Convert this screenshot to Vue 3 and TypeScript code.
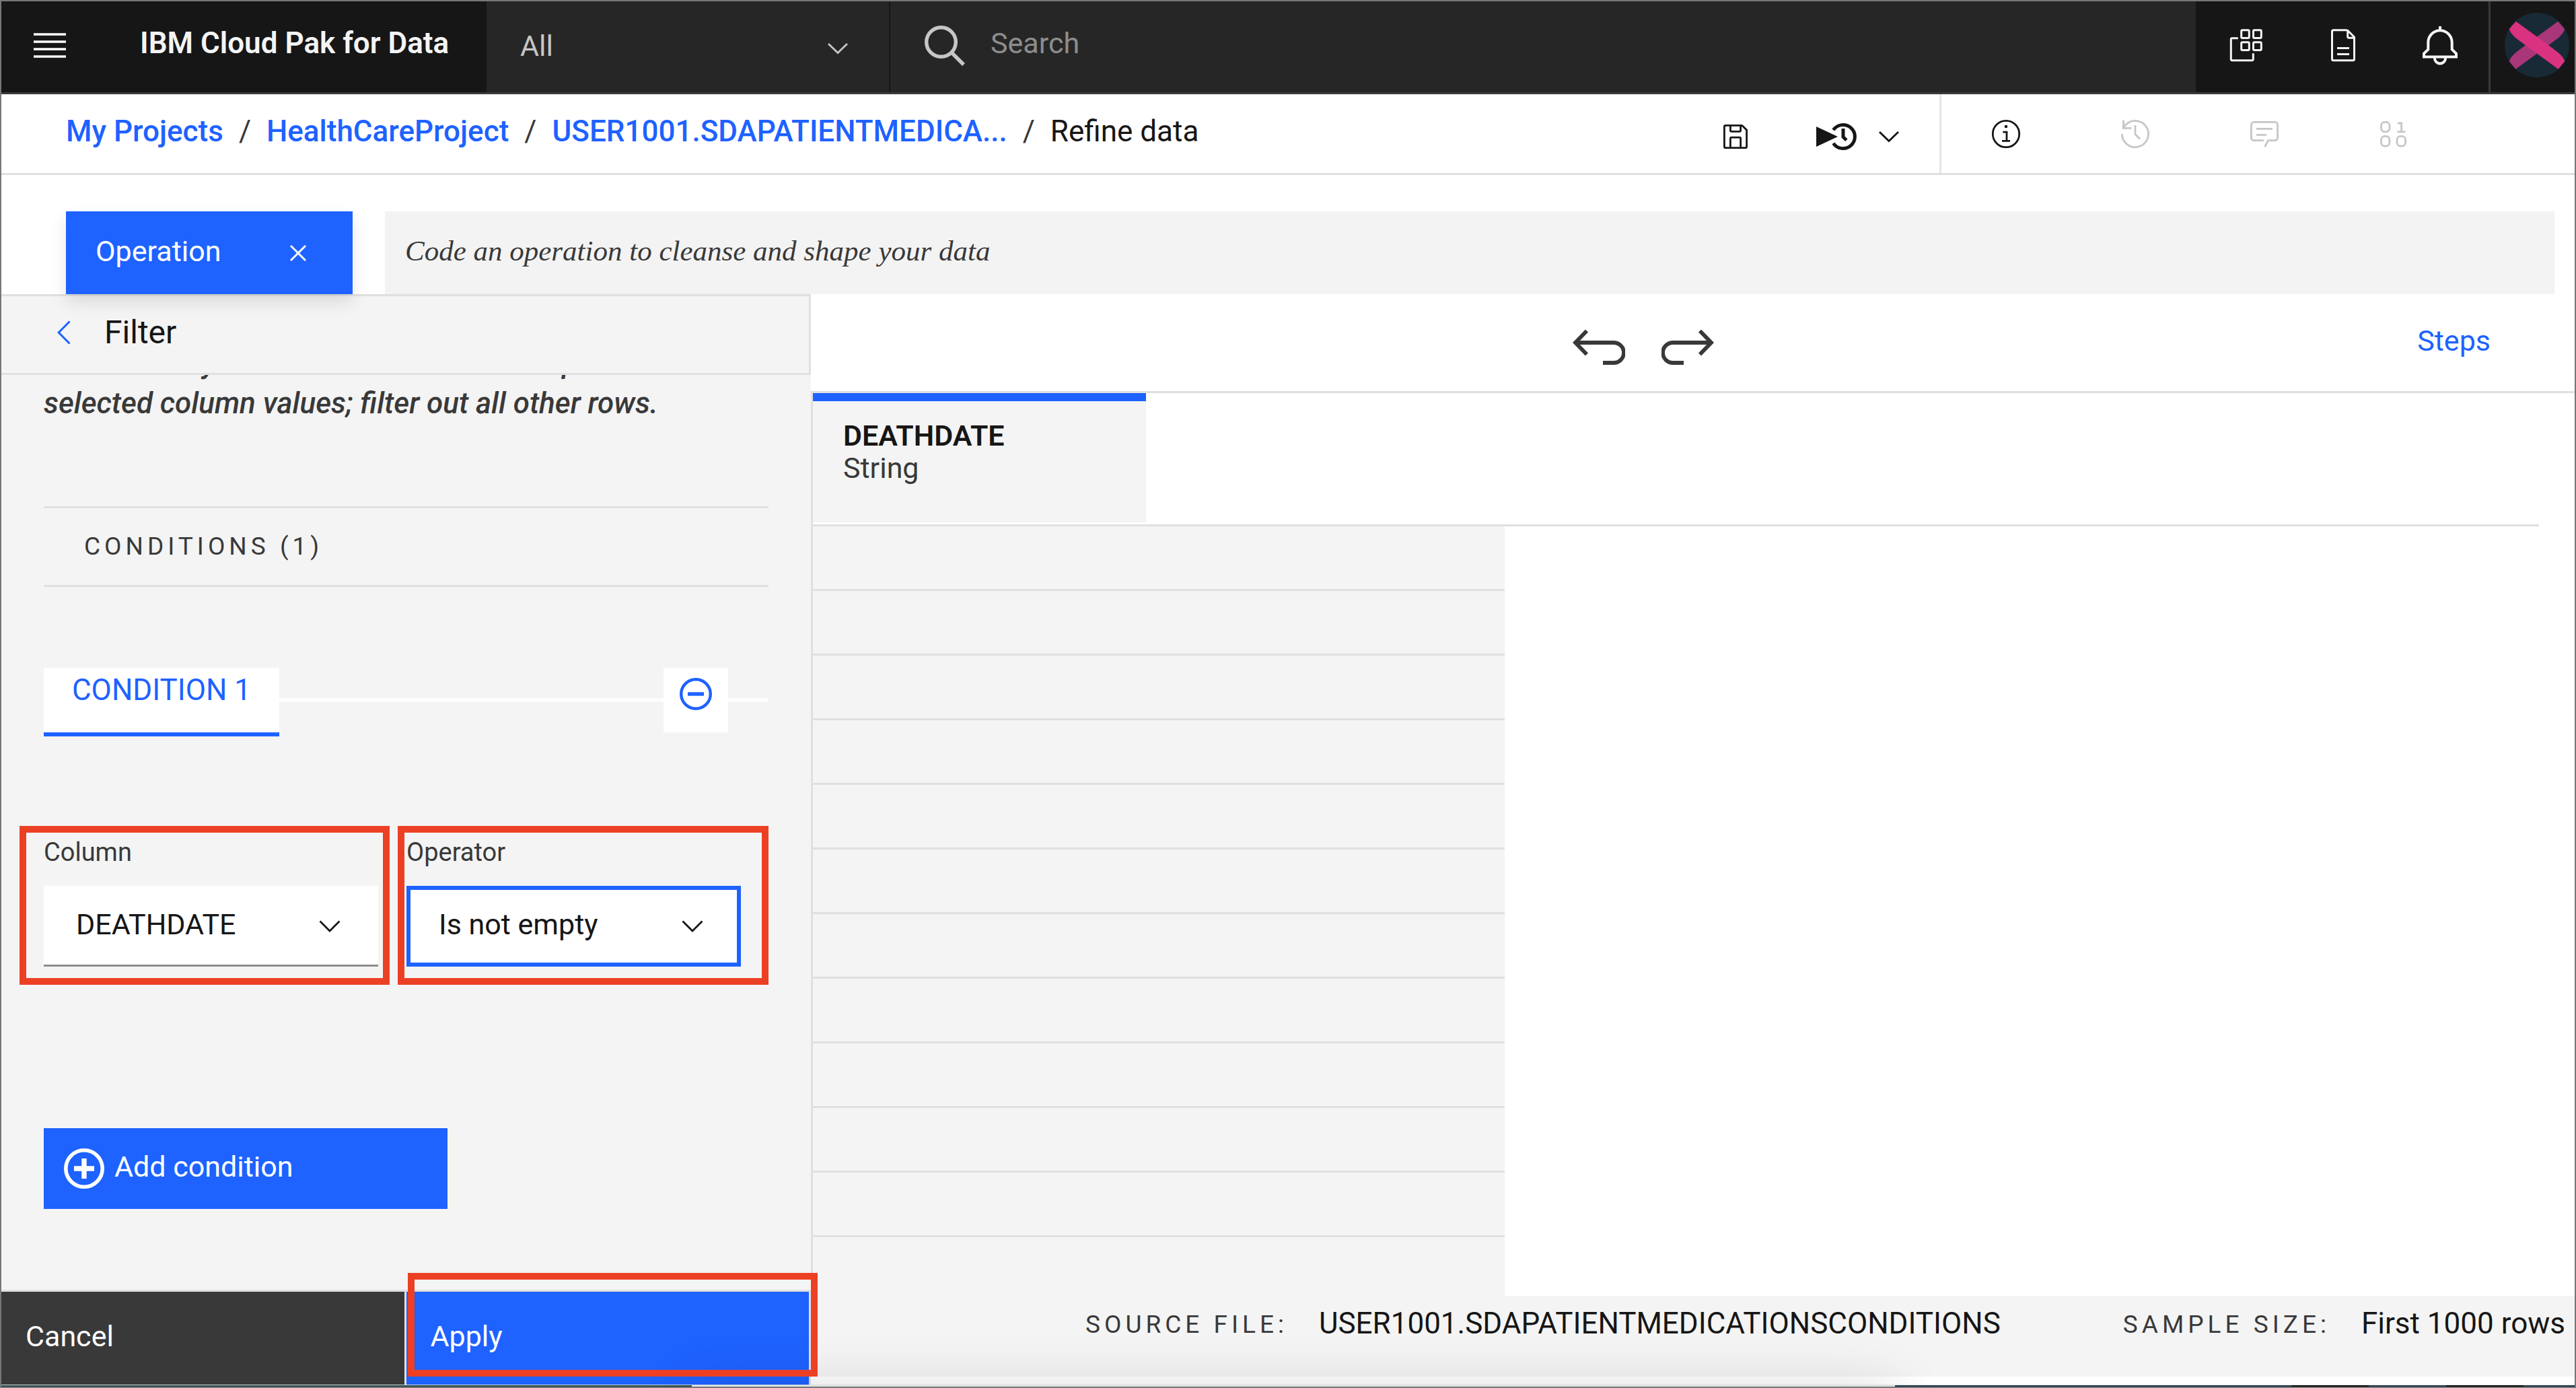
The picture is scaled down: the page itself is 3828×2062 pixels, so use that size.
<script setup lang="ts">
import { ref } from 'vue'

const scope = ref('All')
const query = ref('')
const code = ref('')
const column = ref('DEATHDATE')
const operator = ref('Is not empty')

const crumbs = ['My Projects', 'HealthCareProject', 'USER1001.SDAPATIENTMEDICA...']
const rowCount = 12
</script>

<template>
  <div class="app">
    <header class="topbar">
      <div class="brand">
        <button class="icon-btn menu" aria-label="Open menu">
          <svg width="48" height="37" viewBox="0 0 48 37"><path d="M0 2h48M0 13h48M0 24h48M0 35h48" stroke="#fff" stroke-width="3.6" /></svg>
        </button>
        <h1 class="title">IBM Cloud Pak for Data</h1>
      </div>
      <div class="scope">
        <select v-model="scope" class="scope-select" aria-label="Search scope">
          <option>All</option>
        </select>
        <svg class="scope-arrow" width="48" height="48" viewBox="0 0 48 48" fill="none" stroke="#c6c6c6" stroke-width="2.8"><path d="M10 17l14 13.5L38 17" /></svg>
      </div>
      <label class="search">
        <svg width="60" height="60" viewBox="0 0 60 60" fill="none" stroke="#c6c6c6" stroke-width="5.4"><circle cx="24.5" cy="24.5" r="21.8" /><path d="M40 40l18 18" /></svg>
        <input v-model="query" class="search-input" type="text" placeholder="Search" aria-label="Search" />
      </label>
      <nav class="tools" aria-label="Tools">
        <button class="icon-btn tool" aria-label="App switcher">
          <svg width="60" height="60" viewBox="0 0 60 60" fill="none" stroke="#f4f4f4" stroke-width="3">
            <rect x="22.7" y="7.7" width="11.6" height="11.8" rx="1.5" /><rect x="40.5" y="7.7" width="11.8" height="11.8" rx="1.5" />
            <rect x="22.7" y="25.7" width="11.6" height="11.8" rx="1.5" /><rect x="40.5" y="25.7" width="11.8" height="11.8" rx="1.5" />
            <path d="M17.8 19.7h-9a1.5 1.5 0 0 0-1.5 1.5v30a1.5 1.5 0 0 0 1.5 1.5h30a1.5 1.5 0 0 0 1.5-1.5v-9" />
          </svg>
        </button>
        <button class="icon-btn tool" aria-label="Documents">
          <svg width="60" height="60" viewBox="0 0 60 60" fill="none" stroke="#f4f4f4" stroke-width="3">
            <path d="M35.7 7.7H15.5a2 2 0 0 0-2 2v41a2 2 0 0 0 2 2h29a2 2 0 0 0 2-2V18L36.2 7.7M36.7 7v10.3a2 2 0 0 0 2 2h8M21 34.5h18M21 43.5h18" />
          </svg>
        </button>
        <button class="icon-btn tool" aria-label="Notifications">
          <svg width="60" height="60" viewBox="0 0 60 60" fill="none" stroke="#f4f4f4" stroke-width="4">
            <path d="M30 2v6M30 8.3A17.7 17.7 0 0 1 47.7 26v10.5l6.3 6v5H6v-5l6.3-6V26A17.7 17.7 0 0 1 30 8.3zM21.9 49.3a8.1 8.1 0 0 0 16.2 0" />
          </svg>
        </button>
      </nav>
      <button class="icon-btn profile" aria-label="Profile">
        <svg width="96" height="96" viewBox="0 0 96 96">
          <circle cx="48" cy="48" r="48" fill="#182a35" />
          <path d="M79.3 12.7 31.3 47.7 16.3 59.3Q9 65.5 6.7 72L16.3 83.7 79.3 37.7Q87 31 89.3 24.3Z" fill="#a93678" />
          <path d="M16.7 12.7 64.7 47.7 79.7 59.3Q87 65.5 89.3 72L79.7 83.7 16.7 37.7Q9 31 6.7 24.3Z" fill="#da3280" />
        </svg>
      </button>
    </header>

    <div class="pathbar">
      <nav class="crumbs" aria-label="Breadcrumb">
        <template v-for="c in crumbs" :key="c">
          <a href="#" class="crumb">{{ c }}</a><span class="slash">/</span>
        </template>
        <span>Refine data</span>
      </nav>
      <div class="actions">
        <button class="icon-btn" aria-label="Save">
          <svg width="48" height="48" viewBox="0 0 48 48" fill="none" stroke="#161616" stroke-width="2.8">
            <path d="M34 7.4H8.9a1.5 1.5 0 0 0-1.5 1.5v30.2a1.5 1.5 0 0 0 1.5 1.5h30.2a1.5 1.5 0 0 0 1.5-1.5V14.2L33.6 7.2M16.4 7.4v7.4a1.5 1.5 0 0 0 1.5 1.5h12.2a1.5 1.5 0 0 0 1.5-1.5V7.4M16.4 40.6V26.6a1.5 1.5 0 0 1 1.5-1.5h12.2a1.5 1.5 0 0 1 1.5 1.5v14" />
          </svg>
        </button>
        <button class="icon-btn run" aria-label="Run or schedule a job">
          <svg width="60" height="48" viewBox="0 0 60 48">
            <path d="M0 9v30l32-15z" fill="#161616" />
            <path d="M25.4 14.2a17.5 17.5 0 1 1 0 19.6M40 12v12.5l4.8 4.8" fill="none" stroke="#161616" stroke-width="5" />
          </svg>
        </button>
        <button class="icon-btn" aria-label="Job options">
          <svg width="48" height="48" viewBox="0 0 48 48" fill="none" stroke="#161616" stroke-width="2.8"><path d="M10 17l14 13.5L38 17" /></svg>
        </button>
      </div>
      <div class="panels">
        <button class="icon-btn panel" aria-label="Information">
          <svg width="48" height="48" viewBox="0 0 48 48" fill="none" stroke="#161616" stroke-width="2.8"><circle cx="24" cy="24" r="19.7" /><path d="M19.3 21.1H25v13.3M18 34.4h12" /><circle cx="24" cy="13" r="2.3" fill="#161616" stroke="none" /></svg>
        </button>
        <button class="icon-btn panel" aria-label="History" disabled>
          <svg width="48" height="48" viewBox="0 0 48 48" fill="none" stroke="#c6c6c6" stroke-width="2.8"><path d="M4.4 24a19.6 19.6 0 1 0 5.8-13.9L6 14.6M6.4 3.5v11.8h12.2M24 11v13.5l7 7" /></svg>
        </button>
        <button class="icon-btn panel" aria-label="Comments" disabled>
          <svg width="48" height="48" viewBox="0 0 48 48" fill="none" stroke="#c6c6c6" stroke-width="2.8"><path d="M23 33.6H8.4a4 4 0 0 1-4-4V10.4a4 4 0 0 1 4-4h31.2a4 4 0 0 1 4 4v19.2a4 4 0 0 1-4 4h-10L24.6 43M12 16.3h24M12 25.3h15" /></svg>
        </button>
        <button class="icon-btn panel" aria-label="Data" disabled>
          <svg width="48" height="48" viewBox="0 0 48 48" fill="none" stroke="#c6c6c6" stroke-width="2.8"><rect x="5.4" y="6.4" width="12.6" height="14.4" rx="5.5" /><path d="M30 8h5.6v13M29.5 20.9h12" /><rect x="5.4" y="27.4" width="12.6" height="14.8" rx="5.5" /><rect x="29" y="27.4" width="12.6" height="14.8" rx="5.5" /></svg>
        </button>
      </div>
    </div>

    <div class="command">
      <div class="op-tab">
        <button class="op-name"><span class="label">Operation</span></button>
        <button class="icon-btn" aria-label="Close operation">
          <svg width="26" height="26" viewBox="0 0 26 26" stroke="#fff" stroke-width="3"><path d="M2 2l22 22M24 2L2 24" /></svg>
        </button>
      </div>
      <input v-model="code" class="code" type="text" placeholder="Code an operation to cleanse and shape your data" aria-label="Operation code" />
    </div>

    <main class="main">
      <aside class="side">
        <div class="side-head">
          <button class="icon-btn label" aria-label="Back">
            <svg width="20" height="36" viewBox="0 0 20 36" fill="none" stroke="#1e62ff" stroke-width="3"><path d="M18.5 1.5L2.2 18l16.3 16.5" /></svg>
          </button>
          <h2 class="side-title label">Filter</h2>
        </div>
        <div class="side-body">
          <p class="help">Filter rows by the selected columns. Keep rows with the selected column values; filter out all other rows.</p>
          <h3 class="section-name">CONDITIONS (1)</h3>
          <div class="cond">
            <div class="cond-tab">CONDITION 1</div>
            <div class="rule grow"></div>
            <button class="icon-btn minus" aria-label="Remove condition">
              <svg width="48" height="48" viewBox="0 0 48 48" fill="none" stroke="#1e62ff" stroke-width="4.4"><circle cx="24" cy="24" r="21.8" /><path d="M12 24h24" stroke-width="5.4" /></svg>
            </button>
            <div class="rule tail"></div>
          </div>
          <div class="fields">
            <div class="field">
              <label for="column">Column</label>
              <div class="pick">
                <select id="column" v-model="column"><option>DEATHDATE</option></select>
                <svg class="arrow" width="48" height="48" viewBox="0 0 48 48" fill="none" stroke="#161616" stroke-width="2.8"><path d="M9.5 16.5L24 31l14.5-14.5" /></svg>
              </div>
              <div class="mark mark-column"></div>
            </div>
            <div class="field">
              <label for="operator">Operator</label>
              <div class="pick">
                <select id="operator" v-model="operator" class="focused"><option>Is not empty</option></select>
                <svg class="arrow" width="48" height="48" viewBox="0 0 48 48" fill="none" stroke="#161616" stroke-width="2.8"><path d="M9.5 16.5L24 31l14.5-14.5" /></svg>
              </div>
              <div class="mark mark-operator"></div>
            </div>
          </div>
          <button class="add">
            <svg width="60" height="60" viewBox="0 0 60 60" fill="none" stroke="#fff" stroke-width="5.6"><circle cx="30" cy="30" r="27.2" /><path d="M30 15v30M15 30h30" stroke-width="7.4" /></svg>
            <span class="label">Add condition</span>
          </button>
        </div>
        <div class="side-foot">
          <button class="foot-btn cancel"><span class="label">Cancel</span></button>
          <div class="apply-wrap">
            <button class="foot-btn apply"><span class="label">Apply</span></button>
            <div class="mark mark-apply"></div>
          </div>
        </div>
      </aside>

      <section class="work">
        <div class="toolbar">
          <div class="before"></div>
          <div class="history">
            <button class="icon-btn" aria-label="Undo">
              <svg width="78" height="52" viewBox="0 0 78 52" fill="none" stroke="#393939" stroke-width="5.8"><path d="M3 19h58a15 15 0 0 1 0 30H45M21 1.5L4 19l17 17.5" /></svg>
            </button>
            <button class="icon-btn" aria-label="Redo">
              <svg width="78" height="52" viewBox="0 0 78 52" fill="none" stroke="#393939" stroke-width="5.8"><path d="M75 19H17a15 15 0 0 0 0 30h16M57 1.5L74 19 57 36.5" /></svg>
            </button>
          </div>
          <div class="after"></div>
          <a href="#" class="steps label">Steps</a>
        </div>
        <div class="grid">
          <table>
            <colgroup><col class="col-head" /><col class="col-body" /><col /></colgroup>
            <thead>
              <tr>
                <th><div class="col-name">DEATHDATE<span>String</span></div></th>
                <th></th>
                <th></th>
              </tr>
            </thead>
            <tbody>
              <tr v-for="n in rowCount" :key="n">
                <td colspan="2"></td>
                <td class="blank"></td>
              </tr>
            </tbody>
          </table>
        </div>
        <div class="status">
          <span class="caption">SOURCE FILE:</span>
          <span class="value">USER1001.SDAPATIENTMEDICATIONSCONDITIONS</span>
          <span class="caption sample">SAMPLE SIZE:</span>
          <span class="value">First 1000 rows</span>
        </div>
      </section>
    </main>
    <div class="desk"></div>
    <div class="dock"></div>
  </div>
</template>

<style>
body {
  margin: 0;
}
</style>

<style scoped>
.app, .app * {
  box-sizing: border-box;
}
.app {
  position: relative;
  overflow: hidden;
  display: flex;
  flex-direction: column;
  min-height: 100vh;
  border: 2px solid #777;
  background: #fff;
  color: #161616;
  font: 400 43px/60px Roboto, "Liberation Sans", sans-serif;
}
button, input, select {
  margin: 0;
  padding: 0;
  border: 0;
  border-radius: 0;
  background: none;
  color: inherit;
  font: inherit;
}
h1, h2, h3, p {
  margin: 0;
}
a {
  color: #1e62ff;
  text-decoration: none;
}
svg {
  display: block;
  flex: none;
}
.icon-btn {
  display: flex;
  align-items: center;
  justify-content: center;
  flex: none;
}
.label {
  padding-bottom: 6px;
}
button span.label {
  display: block;
}

.topbar {
  display: flex;
  height: 138px;
  border-bottom: 3px solid #393939;
  background: #262626;
}
.brand {
  display: flex;
  align-items: center;
  gap: 110px;
  width: 721px;
  padding: 0 0 4px 48px;
  background: #161616;
}
.title {
  padding-bottom: 8px;
  color: #f4f4f4;
  font-size: 44px;
  font-weight: 600;
  white-space: nowrap;
}
.scope {
  position: relative;
  width: 600px;
  border-right: 2px solid #161616;
}
.scope-select {
  width: 100%;
  height: 100%;
  padding: 0 50px 4px;
  appearance: none;
  color: #c6c6c6;
}
.scope-arrow {
  position: absolute;
  top: 46px;
  right: 52px;
  pointer-events: none;
}
.search {
  display: flex;
  flex: 1;
  align-items: center;
  gap: 38px;
  padding: 0 0 4px 51px;
}
.search-input {
  flex: 1;
  height: 100%;
  padding-bottom: 8px;
  outline: 0;
}
.search-input::placeholder {
  color: #8d8d8d;
  opacity: 1;
}
.tools {
  display: flex;
  padding-left: 3px;
  background: #161616;
}
.tool {
  width: 144px;
}
.profile {
  width: 128px;
  padding-right: 8px;
  justify-content: flex-end;
  border-left: 3px solid #393939;
  background: #161616;
}
.tool svg, .profile svg {
  margin-bottom: 5px;
}

.pathbar {
  display: flex;
  height: 120px;
  border-bottom: 3px solid #e0e0e0;
}
.crumbs {
  display: flex;
  flex: 1;
  align-items: center;
  gap: 23px;
  padding: 0 0 8px 96px;
  font-size: 44px;
  white-space: nowrap;
}
.crumb {
  font-weight: 500;
}
.slash {
  color: #393939;
}
.actions {
  display: flex;
  align-items: center;
  gap: 24px;
  padding: 8px 51px 0 0;
  border-right: 3px solid #e5e5e5;
}
.run {
  margin-left: 72px;
}
.panels {
  display: flex;
  padding-right: 173px;
}
.panel {
  width: 192px;
}

.command {
  display: flex;
  gap: 48px;
  padding: 54px 30px 0 96px;
}
.op-tab {
  position: relative;
  z-index: 1;
  display: flex;
  width: 426px;
  height: 123px;
  padding: 0 68px 0 44px;
  justify-content: space-between;
  background: #1e62ff;
  box-shadow: 0 12px 24px rgba(0, 0, 0, 0.1);
  color: #fff;
}
.code {
  flex: 1;
  padding: 0 30px 6px;
  background: #f3f3f3;
  font-family: "Liberation Serif", serif;
  font-style: italic;
}
.code::placeholder {
  color: #393939;
  opacity: 1;
}

.main {
  display: flex;
  flex: 1;
}
.side {
  display: flex;
  flex: 0 0 1203px;
  flex-direction: column;
  background: #f4f4f4;
}
.side-head {
  display: flex;
  align-items: center;
  gap: 50px;
  height: 120px;
  padding-left: 83px;
  border: solid #e0e0e0;
  border-width: 3px 3px 3px 0;
}
.side-title {
  font-size: 48px;
  font-weight: 400;
}
.side-body {
  flex: 1;
  overflow: hidden;
  padding: 0 63px;
}
.help {
  margin-top: -48px;
  color: #393939;
  font-size: 44px;
  font-style: italic;
  font-weight: 500;
}
.section-name {
  height: 120px;
  margin-top: 123px;
  padding-left: 60px;
  border: solid #e0e0e0;
  border-width: 3px 0;
  color: #393939;
  font-size: 37px;
  font-weight: 400;
  line-height: 114px;
  letter-spacing: 6px;
}
.cond {
  display: flex;
  height: 102px;
  margin-top: 120px;
}
.cond-tab {
  width: 350px;
  border-bottom: 6px solid #1e62ff;
  background: #fff;
  color: #1e62ff;
  font-size: 44px;
  line-height: 66px;
  text-align: center;
}
.rule {
  height: 6px;
  margin-top: 45px;
  background: #fdfdfd;
}
.grow {
  flex: 1;
}
.tail {
  width: 60px;
}
.minus {
  width: 96px;
  height: 96px;
  padding-bottom: 18px;
  background: #fff;
}
.fields {
  display: flex;
  gap: 42px;
  margin-top: 142px;
}
.field {
  position: relative;
  width: 497px;
}
.field label {
  display: block;
  margin-bottom: 20px;
  color: #393939;
  font-size: 38px;
}
.pick {
  position: relative;
}
.pick select {
  display: block;
  width: 100%;
  height: 120px;
  padding: 0 96px 3px 48px;
  border-bottom: 3px solid #8d8d8d;
  appearance: none;
  background: #fff;
}
.pick .focused {
  outline: 6px solid #1e62ff;
  outline-offset: -6px;
}
.arrow {
  position: absolute;
  top: 36px;
  right: 48px;
  pointer-events: none;
}
/* red callout frames laid over the controls */
.mark {
  position: absolute;
  border: 10px solid #ec4024;
  pointer-events: none;
}
.mark-column {
  inset: -9px -17px -27px -36px;
}
.mark-operator {
  inset: -9px -41px -27px -13px;
}
.add {
  display: flex;
  align-items: center;
  gap: 15px;
  width: 600px;
  height: 120px;
  margin-top: 240px;
  padding-left: 30px;
  background: #1e62ff;
  color: #fff;
}
.side-foot {
  display: grid;
  grid-template-columns: 1fr 1fr;
  gap: 3px;
  padding: 3px 3px 0 0;
  background: #e0e0e0;
}
.foot-btn {
  width: 100%;
  height: 138px;
  padding-left: 36px;
  color: #fff;
  text-align: left;
}
.cancel {
  background: #393939;
}
.apply-wrap {
  position: relative;
}
.apply {
  display: block;
  background: #1e62ff;
}
.mark-apply {
  z-index: 2;
  inset: -28px -13px 12px 2px;
}

.work {
  display: flex;
  flex: 1;
  flex-direction: column;
  min-width: 0;
}
.toolbar {
  display: flex;
  align-items: center;
  height: 147px;
  padding-right: 125px;
  border-bottom: 3px solid #e0e0e0;
}
.before {
  flex: 13;
}
.after {
  flex: 12;
}
.history {
  display: flex;
  gap: 54px;
  margin-top: 14px;
}
.grid {
  flex: 1;
  padding-right: 53px;
  border-left: 3px solid #e0e0e0;
}
table {
  width: 100%;
  border-spacing: 0;
  table-layout: fixed;
}
.col-head {
  width: 495px;
}
.col-body {
  width: 533px;
}
th {
  padding: 0 0 3px;
  border-bottom: 3px solid #e0e0e0;
  text-align: left;
}
.col-name {
  height: 192px;
  padding: 27px 45px;
  border-top: 12px solid #1e62ff;
  background: #f4f4f4;
  font-weight: 600;
  line-height: 48px;
}
.col-name span {
  display: block;
  color: #393939;
  font-weight: 400;
}
td {
  height: 96px;
  padding: 0;
  border-bottom: 3px solid #e0e0e0;
  background: #f4f4f4;
}
td.blank {
  border: 0;
  background: #fff;
}
tr:last-child td {
  height: 87px;
  border: 0;
}
.status {
  display: flex;
  align-items: center;
  justify-content: flex-end;
  gap: 46px;
  height: 120px;
  margin-bottom: 12px;
  padding: 0 14px 38px 0;
  border-left: 3px solid #e0e0e0;
  background: #f4f4f4;
  white-space: nowrap;
}
.caption {
  padding-top: 4px;
  color: #393939;
  font-size: 37px;
  letter-spacing: 6px;
}
.sample {
  margin-left: 136px;
}
.value {
  font-size: 44px;
}
/* desktop edge and the soft-shadowed window that peek out below the page */
.desk {
  height: 3px;
  border-top: 1px solid #dfe3e3;
  background: linear-gradient(90deg, #1c4144 60%, #17323f 60% 89%, #000 89% 92%, #17323f 92% 95%, #000 95% 98%, #17323f 98%);
}
.dock {
  position: absolute;
  top: calc(100% - 3px);
  left: 1026px;
  right: 1010px;
  height: 200px;
  background: #d9dfdf;
  box-shadow: 0 0 80px rgba(0, 0, 0, 0.13);
  pointer-events: none;
}
</style>
